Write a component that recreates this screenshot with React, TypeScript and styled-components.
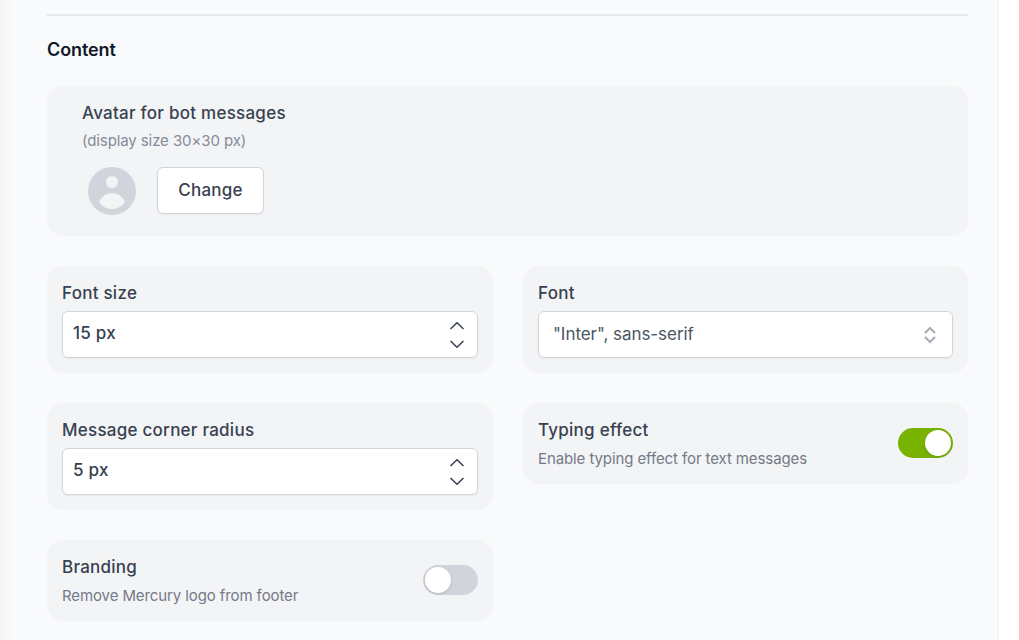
import styled, { createGlobalStyle } from "styled-components";

const GlobalStyle = createGlobalStyle`
    html, body {
        margin: 0;
        height: 100%;
        overflow: hidden;
        background-color: #fff;
        font-family: Inter, "Liberation Sans", sans-serif;
    }
`;

const Page = styled.div`
    display: flex;
    height: 640px;
    width: 1019px;
    overflow: hidden;
`;

const LeftShade = styled.div`
    width: 16px;
    flex-shrink: 0;
    background: linear-gradient(to right, #f3f4f4, #fcfcfc);
`;

const Panel = styled.div`
    width: 983px;
    box-sizing: border-box;
    padding: 14px 30px 0 31px;
    background-color: #f9fafb;
    border-right: 1px solid #f0f1f3;
`;

const Divider = styled.div`
    height: 2px;
    background-color: #e5e7eb;
`;

const SectionTitle = styled.h2`
    margin: 24px 0 26px;
    font-size: 18px;
    line-height: 20px;
    letter-spacing: -0.1px;
    font-weight: 600;
    color: #111827;
`;

const AvatarCard = styled.div`
    box-sizing: border-box;
    height: 150px;
    padding: 15px 35px;
    border-radius: 16px;
    background-color: #f3f4f6;
`;

const Grid = styled.div`
    display: grid;
    grid-template-columns: 446px 445px;
    column-gap: 30px;
    row-gap: 30px;
    margin-top: 30px;
    align-items: start;
`;

const Card = styled.div`
    box-sizing: border-box;
    padding: 15px;
    border-radius: 16px;
    background-color: #f3f4f6;
`;

const ToggleCard = styled(Card)`
    display: flex;
    align-items: center;
    justify-content: space-between;
    height: 81px;
`;

const ToggleText = styled.div`
    align-self: flex-start;
`;

const Label = styled.div`
    font-size: 17px;
    line-height: 24px;
    letter-spacing: 0.25px;
    font-weight: 500;
    color: #374151;
`;

const Hint = styled.div`
    margin-top: 7px;
    font-size: 15px;
    line-height: 20px;
    letter-spacing: -0.1px;
    color: #737a87;
`;

const AvatarHint = styled(Hint)`
    margin-top: 6px;
    color: #858b97;
`;

const AvatarRow = styled.div`
    display: flex;
    align-items: flex-start;
    gap: 21px;
    margin: 16px 0 0 6px;
`;

const ChangeButton = styled.button`
    width: 107px;
    height: 47px;
    padding: 0 0 2px;
    border: 1px solid #d1d5db;
    border-radius: 6px;
    background-color: #fff;
    box-shadow: 0 1px 2px rgba(0, 0, 0, 0.05);
    font-family: inherit;
    font-size: 17px;
    letter-spacing: 0.25px;
    font-weight: 500;
    color: #374151;
`;

const Field = styled.div`
    display: flex;
    align-items: center;
    justify-content: space-between;
    box-sizing: border-box;
    height: 47px;
    margin-top: 6px;
    border: 1px solid #d1d5db;
    border-radius: 6px;
    background-color: #fff;
    box-shadow: 0 1px 2px rgba(0, 0, 0, 0.05);
`;

const NumberField = styled(Field)`
    padding: 0 13px 0 10px;
`;

const SelectField = styled(Field)`
    padding: 0 16px 0 14px;
`;

const NumberValue = styled.span`
    padding-bottom: 4px;
    font-size: 17px;
    letter-spacing: 0.25px;
    font-weight: 500;
    color: #374151;
`;

const SelectValue = styled.span`
    padding-bottom: 2px;
    font-size: 17px;
    letter-spacing: -0.05px;
    font-weight: 400;
    color: #4b5563;
`;

const Stepper = styled.svg`
    display: block;
    color: #374151;
`;

const SelectArrows = styled.svg`
    display: block;
    color: #a8adb8;
`;

const Switch = styled.div<{ $on: boolean }>`
    display: flex;
    justify-content: ${(p) => (p.$on ? "flex-end" : "flex-start")};
    align-items: center;
    flex-shrink: 0;
    box-sizing: border-box;
    width: 55px;
    height: 30px;
    margin-bottom: 2px;
    padding: 2px;
    border-radius: 15px;
    background-color: ${(p) => (p.$on ? "#77b300" : "#d1d5db")};
`;

const Knob = styled.div`
    width: 26px;
    height: 26px;
    border-radius: 50%;
    background-color: #fff;
    box-shadow: 0 1px 3px rgba(0, 0, 0, 0.15);
`;

const AvatarIcon = () => (
    <svg width="48" height="48" viewBox="0 0 48 48">
        <circle cx="24" cy="24" r="24" fill="#d1d5db" />
        <circle cx="24" cy="15" r="6" fill="#f3f4f6" />
        <path
            d="M11 35 C14 29 19 26 24 26 C29 26 34 29 37 35 C34 39.5 29 42 24 42 C19 42 14 39.5 11 35 Z"
            fill="#f3f4f6"
        />
    </svg>
);

const StepperIcon = () => (
    <Stepper width="14" height="26" viewBox="0 0 14 26" fill="none" stroke="currentColor" strokeWidth="1.5">
        <path d="M0.5 7 L7 0.75 L13.5 7" />
        <path d="M0.5 19 L7 25.25 L13.5 19" />
    </Stepper>
);

const SelectArrowsIcon = () => (
    <SelectArrows width="12" height="18" viewBox="0 0 12 18" fill="none" stroke="currentColor" strokeWidth="2.2">
        <path d="M1 7 L6 2 L11 7" />
        <path d="M1 11 L6 16 L11 11" />
    </SelectArrows>
);

const App = () => {
    return (
        <Page>
            <GlobalStyle />
            <LeftShade />
            <Panel>
                <Divider />
                <SectionTitle>Content</SectionTitle>
                <AvatarCard>
                    <Label>Avatar for bot messages</Label>
                    <AvatarHint>(display size 30×30 px)</AvatarHint>
                    <AvatarRow>
                        <AvatarIcon />
                        <ChangeButton>Change</ChangeButton>
                    </AvatarRow>
                </AvatarCard>
                <Grid>
                    <Card>
                        <Label>Font size</Label>
                        <NumberField>
                            <NumberValue>15 px</NumberValue>
                            <StepperIcon />
                        </NumberField>
                    </Card>
                    <Card>
                        <Label>Font</Label>
                        <SelectField>
                            <SelectValue>"Inter", sans-serif</SelectValue>
                            <SelectArrowsIcon />
                        </SelectField>
                    </Card>
                    <Card>
                        <Label>Message corner radius</Label>
                        <NumberField>
                            <NumberValue>5 px</NumberValue>
                            <StepperIcon />
                        </NumberField>
                    </Card>
                    <ToggleCard>
                        <ToggleText>
                            <Label>Typing effect</Label>
                            <Hint>Enable typing effect for text messages</Hint>
                        </ToggleText>
                        <Switch $on={true}>
                            <Knob />
                        </Switch>
                    </ToggleCard>
                    <ToggleCard>
                        <ToggleText>
                            <Label>Branding</Label>
                            <Hint>Remove Mercury logo from footer</Hint>
                        </ToggleText>
                        <Switch $on={false}>
                            <Knob />
                        </Switch>
                    </ToggleCard>
                </Grid>
            </Panel>
        </Page>
    );
};

export default App;
